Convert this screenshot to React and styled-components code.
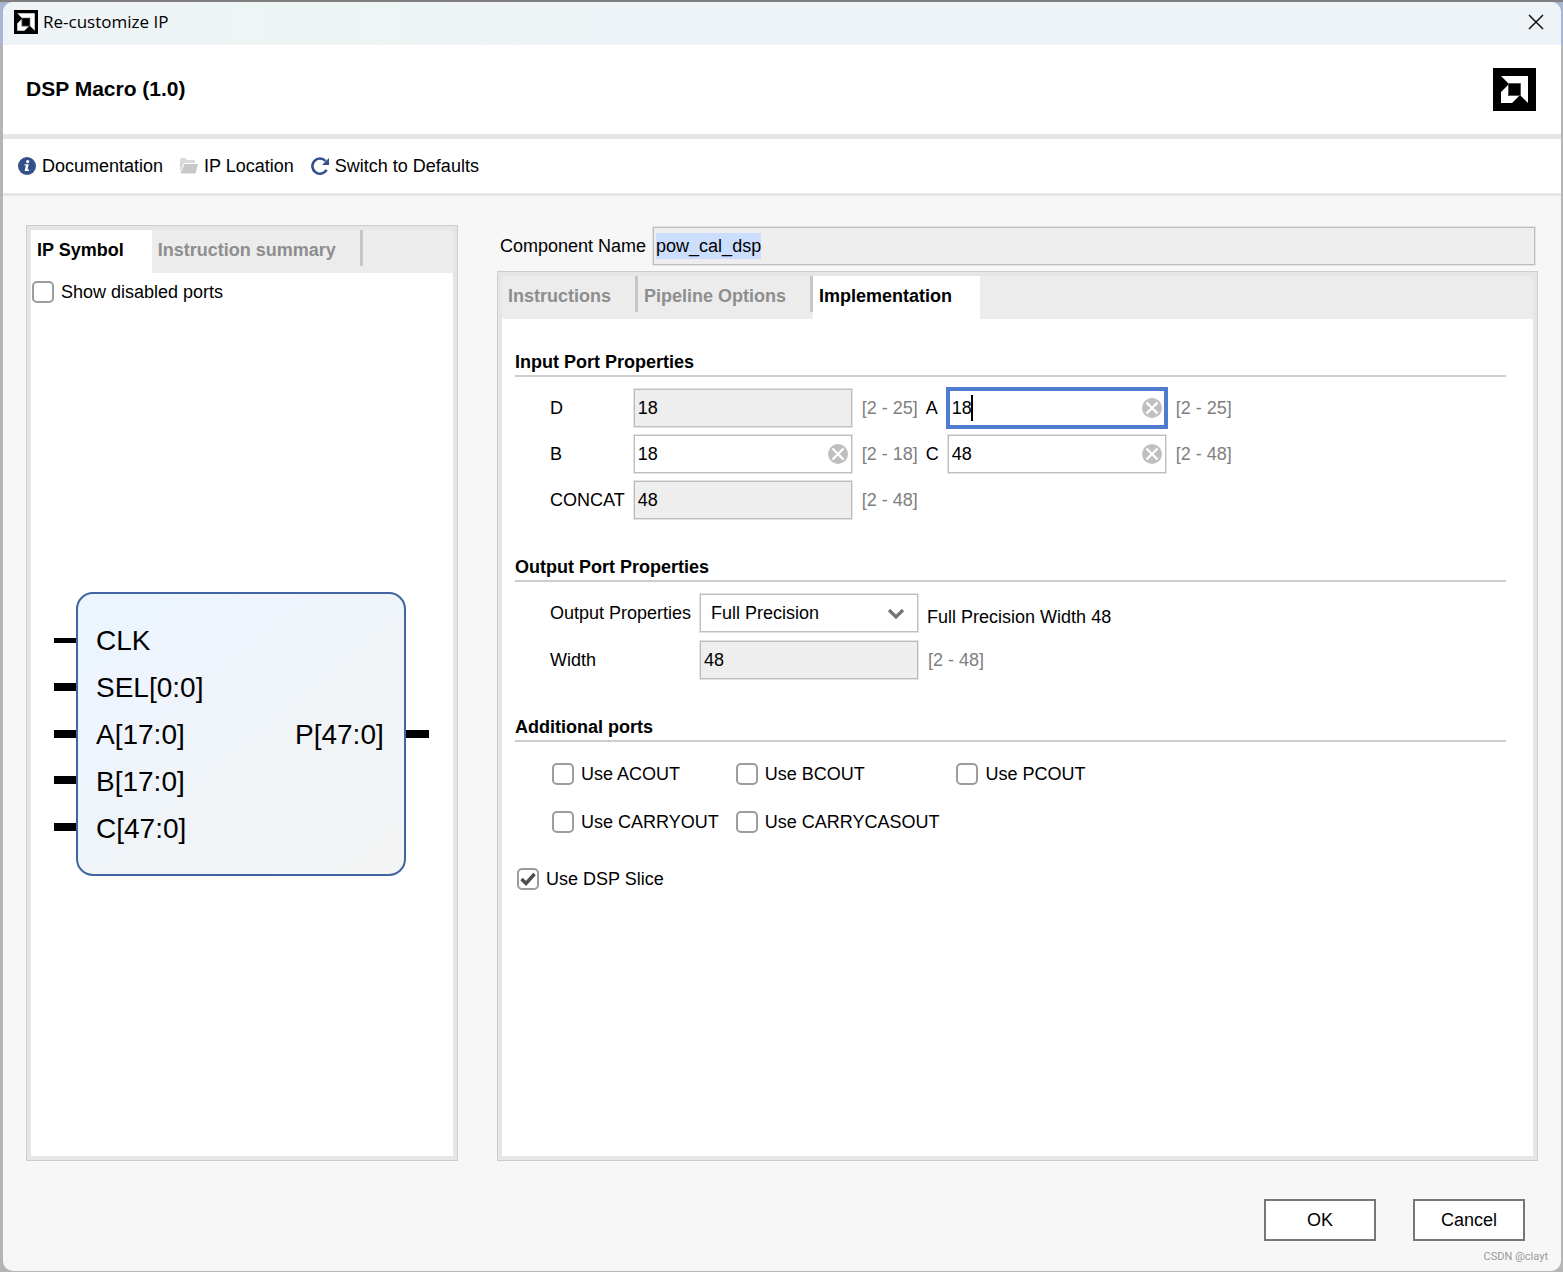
import React, { useState } from 'react';
import styled, { createGlobalStyle } from 'styled-components';

const symbolPorts = [
  { name: 'CLK', y: 58, pinY: 46, pinHeight: 5 },
  { name: 'SEL[0:0]', y: 105, pinY: 91, pinHeight: 8 },
  { name: 'A[17:0]', y: 152, pinY: 138, pinHeight: 8 },
  { name: 'B[17:0]', y: 199, pinY: 184, pinHeight: 8 },
  { name: 'C[47:0]', y: 246, pinY: 231, pinHeight: 8 }
];

function Logo({ size, viewBox = '0 0 43 43' }) {
  return (
    <svg width={size} height={size} viewBox={viewBox} aria-hidden="true">
      <rect width="43" height="43" fill="#000" />
      <path d="M8 8H35V35L27 27V16H16Z" fill="#fff" />
      <path d="M15 17V28H26L19 35H8V24Z" fill="#fff" />
      <path d="M15.500 15.500H27.500V27.500H15.500Z" fill="#000" stroke="#555" />
    </svg>
  );
}

function InfoIcon() {
  return (
    <svg width="18" height="18" viewBox="0 0 18 18" aria-hidden="true">
      <circle cx="9" cy="9" r="9" fill="#33508a" />
      <circle cx="9.700" cy="4.600" r="1.600" fill="#fff" />
      <path d="M6.500 7.200H10.700L9.500 12.600H11V14H6.600L7.900 8.600H6.500Z" fill="#fff" />
    </svg>
  );
}

function FolderIcon() {
  return (
    <svg width="18" height="16" viewBox="0 0 18 16" aria-hidden="true">
      <path d="M0 15V2Q0 0 2 0H5L7 2H14Q15 2 15 3V5H4L1 12Z" fill="#d9d9d9" />
      <path d="M4.500 6H18L15.500 15.500H0.500Z" fill="#c8c8c8" />
    </svg>
  );
}

function RefreshIcon() {
  return (
    <svg width="18" height="18" viewBox="0 0 18 18" aria-hidden="true">
      <path d="M15.600 12.800A7.600 7.600 0 1 1 14.600 4" fill="none" stroke="#33508a" strokeWidth="2.600" />
      <path d="M18 1V8H11Z" fill="#33508a" />
    </svg>
  );
}

function CloseIcon() {
  return (
    <svg width="16" height="16" viewBox="0 0 16 16" aria-hidden="true">
      <path d="M1 1L15 15M15 1L1 15" stroke="#111" strokeWidth="1.500" />
    </svg>
  );
}

function ClearIcon() {
  return (
    <svg width="20" height="20" viewBox="0 0 20 20" aria-hidden="true">
      <circle cx="10" cy="10" r="10" fill="#bfbfbf" />
      <path d="M4.500 4.500L15.500 15.500M15.500 4.500L4.500 15.500" stroke="#fff" strokeWidth="2.400" />
    </svg>
  );
}

function NumberField({ id, value, disabled, active }) {
  const [text, setText] = useState(value);

  return (
    <FieldWrapper>
      <TextInput
        id={id}
        value={text}
        disabled={disabled}
        $active={active}
        onChange={(e) => setText(e.target.value)}
      />
      {active && <Caret />}
      {!disabled && (
        <ClearButton type="button" aria-label={`Clear ${id}`} onClick={() => setText('')}>
          <ClearIcon />
        </ClearButton>
      )}
    </FieldWrapper>
  );
}

function CheckField({ label, defaultChecked = false }) {
  const [checked, setChecked] = useState(defaultChecked);

  return (
    <CheckLabel>
      <CheckBoxWrapper>
        <CheckBox type="checkbox" checked={checked} onChange={() => setChecked(!checked)} />
        {checked && (
          <CheckMark width="22" height="22" viewBox="0 0 22 22" aria-hidden="true">
            <path d="M4.500 11L9 15.500L17.500 6" fill="none" stroke="#4d4d4d" strokeWidth="3.400" />
          </CheckMark>
        )}
      </CheckBoxWrapper>
      {label}
    </CheckLabel>
  );
}

function IpSymbol() {
  return (
    <SymbolDrawing viewBox="0 0 376 284" role="img" aria-label="IP symbol">
      <defs>
        <linearGradient id="body" x1="0" y1="0" x2="1" y2="1">
          <stop offset="0" stopColor="#eaf5fd" />
          <stop offset="0.3" stopColor="#eff4fd" />
          <stop offset="0.5" stopColor="#eff4f8" />
          <stop offset="1" stopColor="#f4f4f4" />
        </linearGradient>
      </defs>
      <rect x="23" y="1" width="328" height="282" rx="16" fill="url(#body)" stroke="#4264a0" strokeWidth="2" />
      {symbolPorts.map((port) => (
        <g key={port.name}>
          <rect x="0" y={port.pinY} width="22" height={port.pinHeight} />
          <text x="42" y={port.y}>
            {port.name}
          </text>
        </g>
      ))}
      <text x="241" y="152">
        P[47:0]
      </text>
      <rect x="352" y="138" width="23" height="8" />
    </SymbolDrawing>
  );
}

function App() {
  const [name, setName] = useState('pow_cal_dsp');

  return (
    <Backdrop>
      <GlobalStyle />
      <Dialog>
        <TitleBar>
          <Logo size={24} viewBox="3 3 37 37" />
          <WindowTitle>Re-customize IP</WindowTitle>
          <CloseButton type="button" aria-label="Close">
            <CloseIcon />
          </CloseButton>
        </TitleBar>

        <Header>
          <IpName>DSP Macro (1.0)</IpName>
          <Logo size={43} />
        </Header>

        <Toolbar>
          <ToolButton type="button">
            <InfoIcon />
            Documentation
          </ToolButton>
          <ToolButton type="button">
            <FolderIcon />
            IP Location
          </ToolButton>
          <ToolButton type="button">
            <RefreshIcon />
            Switch to Defaults
          </ToolButton>
        </Toolbar>

        <Body>
          <Panel>
            <TabBar role="tablist">
              <Tab type="button" role="tab" aria-selected="true" $active>
                IP Symbol
              </Tab>
              <Tab type="button" role="tab" aria-selected="false">
                Instruction summary
              </Tab>
            </TabBar>
            <PortToggle>
              <CheckField label="Show disabled ports" />
            </PortToggle>
            <SymbolArea>
              <IpSymbol />
            </SymbolArea>
          </Panel>

          <Settings>
            <NameRow>
              <label htmlFor="component-name">Component Name</label>
              <NameBox>
                <NameInput id="component-name" value={name} onChange={(e) => setName(e.target.value)} />
              </NameBox>
            </NameRow>

            <Panel>
              <TabBar role="tablist">
                <Tab type="button" role="tab" aria-selected="false">
                  Instructions
                </Tab>
                <Tab type="button" role="tab" aria-selected="false">
                  Pipeline Options
                </Tab>
                <Tab type="button" role="tab" aria-selected="true" $active>
                  Implementation
                </Tab>
              </TabBar>

              <Sections>
                <Section>
                  <SectionTitle>Input Port Properties</SectionTitle>
                  <InputGrid>
                    <label htmlFor="D">D</label>
                    <NumberField id="D" value="18" disabled />
                    <Range>[2 - 25]</Range>
                    <label htmlFor="A">A</label>
                    <NumberField id="A" value="18" active />
                    <Range>[2 - 25]</Range>

                    <label htmlFor="B">B</label>
                    <NumberField id="B" value="18" />
                    <Range>[2 - 18]</Range>
                    <label htmlFor="C">C</label>
                    <NumberField id="C" value="48" />
                    <Range>[2 - 48]</Range>

                    <label htmlFor="CONCAT">CONCAT</label>
                    <NumberField id="CONCAT" value="48" disabled />
                    <Range>[2 - 48]</Range>
                  </InputGrid>
                </Section>

                <Section>
                  <SectionTitle>Output Port Properties</SectionTitle>
                  <OutputGrid>
                    <label htmlFor="output-properties">Output Properties</label>
                    <FieldWrapper>
                      <Select id="output-properties" defaultValue="full">
                        <option value="full">Full Precision</option>
                        <option value="user">User Defined</option>
                      </Select>
                      <SelectArrow width="18" height="12" viewBox="0 0 18 12" aria-hidden="true">
                        <path d="M2 3L9 10L16 3" fill="none" stroke="#757575" strokeWidth="3.200" />
                      </SelectArrow>
                    </FieldWrapper>
                    <Hint>Full Precision Width 48</Hint>

                    <label htmlFor="Width">Width</label>
                    <NumberField id="Width" value="48" disabled />
                    <Range>[2 - 48]</Range>
                  </OutputGrid>
                </Section>

                <Section>
                  <SectionTitle>Additional ports</SectionTitle>
                  <PortGrid>
                    <CheckField label="Use ACOUT" />
                    <CheckField label="Use BCOUT" />
                    <CheckField label="Use PCOUT" />
                    <CheckField label="Use CARRYOUT" />
                    <CheckField label="Use CARRYCASOUT" />
                  </PortGrid>
                  <SliceRow>
                    <CheckField label="Use DSP Slice" defaultChecked />
                  </SliceRow>
                </Section>
              </Sections>
            </Panel>
          </Settings>
        </Body>

        <Footer>
          <ActionButton type="button">OK</ActionButton>
          <ActionButton type="button">Cancel</ActionButton>
        </Footer>
        <Watermark>CSDN @clayt</Watermark>
      </Dialog>
    </Backdrop>
  );
}

const GlobalStyle = createGlobalStyle`
  * {
    box-sizing: border-box;
  }
  body {
    margin: 0;
    color: #000;
    font-family: 'Liberation Sans', Arial, sans-serif;
    font-size: 18px;
    line-height: 24px;
  }
  button, input, select {
    font: inherit;
    color: inherit;
  }
`;

const Backdrop = styled.div`
  display: flex;
  min-height: 100vh;
  padding: 2px 2px 1px 3px;
  background: linear-gradient(#7f7f7f 2px, #a9b6d3 2px 45px, #b5b5b5 45px);
`;

const Dialog = styled.div`
  position: relative;
  flex: 1;
  display: flex;
  flex-direction: column;
  overflow: hidden;
  border-radius: 10px;
  background: #f7f7f7;
`;

const TitleBar = styled.div`
  display: flex;
  align-items: center;
  gap: 5px;
  height: 43px;
  padding: 0 17px 3px 11px;
  background: linear-gradient(90deg, #eef3f7, #edf5f4 20%, #eef3f7 40%);
`;

const WindowTitle = styled.span`
  flex: 1;
  font-family: 'Open Sans', 'Noto Sans', sans-serif;
  font-size: 17px;
`;

const CloseButton = styled.button`
  display: flex;
  padding: 0;
  border: 0;
  background: none;
`;

const Header = styled.header`
  display: flex;
  align-items: center;
  justify-content: space-between;
  height: 94px;
  padding: 0 25px 0 23px;
  border-bottom: 5px solid #e6e6e6;
  background: #fff;
`;

const IpName = styled.h1`
  margin: 0;
  padding-bottom: 2px;
  font-size: 21px;
`;

const Toolbar = styled.div`
  display: flex;
  align-items: center;
  gap: 17px;
  height: 57px;
  padding: 0 15px;
  border-bottom: 3px solid #e6e6e6;
  background: #fff;
`;

const ToolButton = styled.button`
  display: flex;
  align-items: center;
  gap: 6px;
  padding: 0;
  border: 0;
  background: none;
`;

const Body = styled.main`
  flex: 1;
  display: grid;
  grid-template-columns: 432fr 1041fr;
  gap: 39px;
  padding: 29px 23px 0;
`;

const Settings = styled.div`
  display: flex;
  flex-direction: column;
  gap: 5px;
`;

const NameRow = styled.div`
  display: flex;
  align-items: center;
  gap: 6px;
  padding: 1px 2px 0 3px;
`;

const NameBox = styled.div`
  flex: 1;
  display: flex;
  align-items: center;
  height: 40px;
  padding: 0 3px;
  border: 1px solid #e3e3e3;
  box-shadow: inset 0 0 0 1px #bdbdbd;
  background: #eee;
`;

const NameInput = styled.input`
  field-sizing: content;
  height: 26px;
  padding: 0;
  border: 0;
  outline: 0;
  background: #cbdefd;
`;

const Panel = styled.section`
  flex: 1;
  display: flex;
  flex-direction: column;
  border: 1px solid #cdcdcd;
  box-shadow: inset 0 0 0 4px #e6e6e6;
  padding: 4px;
  background: #fff;
`;

const TabBar = styled.div`
  display: flex;
  height: 43px;
  background: #ececec;
`;

const Tab = styled.button`
  height: ${(props) => (props.$active ? '43px' : '36px')};
  padding: ${(props) => (props.$active ? '0 28px 3px 6px' : '4px 24px 0 6px')};
  border: 0;
  border-right: ${(props) => (props.$active ? '0' : '3px solid #c6c6c6')};
  background: ${(props) => (props.$active ? '#fff' : 'transparent')};
  color: ${(props) => (props.$active ? '#000' : '#8e8e8e')};
  font-weight: 700;
`;

const PortToggle = styled.div`
  padding: 0 1px;
`;

const SymbolArea = styled.div`
  flex: 1;
  display: flex;
  align-items: center;
  justify-content: center;
`;

const SymbolDrawing = styled.svg`
  width: 376px;
  max-width: 100%;

  text {
    font-size: 28px;
  }
`;

const Sections = styled.div`
  display: flex;
  flex-direction: column;
  gap: 35px;
  padding: 31px 27px 31px 13px;
`;

const Section = styled.section`
  display: flex;
  flex-direction: column;
`;

const SectionTitle = styled.h2`
  margin: 0 0 11px;
  border-bottom: 2px solid #cdcdcd;
  font-size: 18px;
  line-height: 25px;
`;

const InputGrid = styled.div`
  display: grid;
  grid-template-columns: max-content 220px max-content max-content 220px max-content;
  align-items: center;
  gap: 6px 8px;
  padding-left: 35px;
`;

const OutputGrid = styled(InputGrid)`
  grid-template-columns: max-content 220px max-content;
  row-gap: 7px;
`;

const FieldWrapper = styled.div`
  position: relative;
  display: flex;
  align-items: center;
`;

const TextInput = styled.input`
  width: 100%;
  height: 40px;
  padding: 0 30px 0 4px;
  border: 1px solid ${(props) => (props.$active ? '#4f7bd0' : '#e3e3e3')};
  box-shadow: inset 0 0 0 ${(props) => (props.$active ? '2px #4f7bd0' : '1px #bdbdbd')};
  outline: ${(props) => (props.$active ? '1px solid #4f7bd0' : '0')};
  background: #fff;

  &:disabled {
    background: #eee;
    color: #000;
  }
`;

const Caret = styled.span`
  position: absolute;
  left: 24px;
  width: 2px;
  height: 26px;
  background: #000;
`;

const ClearButton = styled.button`
  position: absolute;
  right: 5px;
  display: flex;
  padding: 0;
  border: 0;
  background: none;
`;

const Range = styled.span`
  padding-left: 1px;
  color: #808080;
`;

const Select = styled.select`
  appearance: none;
  width: 100%;
  height: 40px;
  padding: 0 30px 0 11px;
  border: 1px solid #e3e3e3;
  border-radius: 0;
  box-shadow: inset 0 0 0 1px #bdbdbd;
  background: #fff;
`;

const SelectArrow = styled.svg`
  position: absolute;
  right: 14px;
  pointer-events: none;
`;

const Hint = styled.span`
  align-self: end;
  line-height: 32px;
`;

const PortGrid = styled.div`
  display: grid;
  grid-template-columns: repeat(3, max-content);
  gap: 10px 17px;
  padding: 2px 0 0 37px;
`;

const SliceRow = styled.div`
  padding: 19px 2px 0;
`;

const CheckLabel = styled.label`
  display: flex;
  align-items: center;
  gap: 7px;
  height: 38px;
`;

const CheckBoxWrapper = styled.span`
  position: relative;
  display: flex;
`;

const CheckBox = styled.input`
  appearance: none;
  width: 22px;
  height: 22px;
  margin: 0;
  border: 2px solid #9c9c9c;
  border-radius: 5px;
  background: #fff;
`;

const CheckMark = styled.svg`
  position: absolute;
  inset: 0;
  pointer-events: none;
`;

const Footer = styled.footer`
  display: flex;
  justify-content: flex-end;
  gap: 37px;
  padding: 38px 36px 30px;
`;

const ActionButton = styled.button`
  width: 112px;
  height: 42px;
  padding: 0;
  border: 2px solid #777;
  background: #fff;
`;

const Watermark = styled.span`
  position: absolute;
  right: 13px;
  bottom: 2px;
  color: #999;
  font-family: Roboto, 'Liberation Sans', sans-serif;
  font-size: 11px;
`;

export default App;
